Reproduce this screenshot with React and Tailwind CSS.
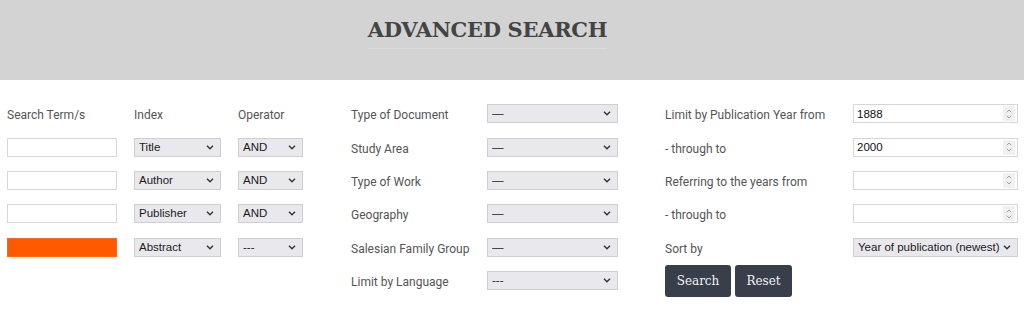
import React from "react";

const Chevron = () => (
  <svg width="8" height="5" viewBox="0 0 8 5" className="pointer-events-none absolute right-[7px] top-[7px]">
    <path d="M1 0.8 L4 3.8 L7 0.8" fill="none" stroke="#333" strokeWidth="1.4" />
  </svg>
);

function Select({ value, w }) {
  return (
    <div className={`relative h-[19px] ${w}`}>
      <select
        defaultValue={value}
        className="block h-[19px] w-full appearance-none rounded-none border border-[#cfcfd3] bg-[#e9e9ed] py-0 pl-[4px] pr-[14px] text-[11.5px] leading-[17px] text-[#1a1a1a] outline-none [font-family:'Liberation_Sans',Arial,sans-serif]"
      >
        <option>{value}</option>
      </select>
      <Chevron />
    </div>
  );
}

function NumInput({ value }) {
  return (
    <div className="relative h-[19px] w-[165px]">
      <input
        type="text"
        defaultValue={value}
        className="block h-[19px] w-full border border-[#d6d6d6] bg-white py-0 pl-[3px] text-[11.5px] text-[#111] outline-none [font-family:'Liberation_Sans',Arial,sans-serif]"
      />
      <div className="pointer-events-none absolute right-[3px] top-[2px] flex h-[15px] w-[12px] flex-col items-center justify-center gap-[2px] bg-[#f0f0f0]">
        <svg width="6" height="4" viewBox="0 0 6 4"><path d="M0.8 3.3 L3 1 L5.2 3.3" fill="none" stroke="#a0a0a0" strokeWidth="1" /></svg>
        <svg width="6" height="4" viewBox="0 0 6 4"><path d="M0.8 0.7 L3 3 L5.2 0.7" fill="none" stroke="#a0a0a0" strokeWidth="1" /></svg>
      </div>
    </div>
  );
}

const Label = ({ children, className = "" }) => (
  <div className={`flex items-center pt-[3px] text-[12px] text-[#555] ${className}`}>{children}</div>
);

export default function App() {
  const rows = [
    ["Title", "AND"],
    ["Author", "AND"],
    ["Publisher", "AND"],
    ["Abstract", "---"],
  ];
  const mid = [
    ["Type of Document", "—"],
    ["Study Area", "—"],
    ["Type of Work", "—"],
    ["Geography", "—"],
    ["Salesian Family Group", "—"],
    ["Limit by Language", "---"],
  ];
  const right = [
    ["Limit by Publication Year from", "1888"],
    ["- through to", "2000"],
    ["Referring to the years from", ""],
    ["- through to", ""],
  ];
  return (
    <div className="min-h-[315px] w-[1024px] bg-white [font-family:Roboto,'Noto_Sans',sans-serif]">
      <div className="flex h-[80px] justify-center bg-[#d3d3d3] pr-[49px] pt-[14px]">
        <div className="h-[35px] border-b border-[#dddddd]">
          <h1 className="text-[21px] font-bold leading-[32px] tracking-[-0.3px] text-[#444] [font-family:'DejaVu_Serif',serif]">
            ADVANCED SEARCH
          </h1>
        </div>
      </div>

      <div className="flex pt-[17px]">
        {/* Left group */}
        <div className="ml-[7px] grid w-[297px] grid-cols-[110px_87px_65px] auto-rows-[33.4px] gap-x-[17px]">
          <Label>Search Term/s</Label>
          <Label>Index</Label>
          <Label>Operator</Label>
          {rows.map(([idx, op], i) => (
            <React.Fragment key={i}>
              <div className="flex items-center">
                <input
                  type="text"
                  className={`block h-[19px] w-[110px] border outline-none ${i === 3 ? "border-[#f46a1e] bg-[#ff5a00]" : "border-[#d6d6d6] bg-white"}`}
                />
              </div>
              <div className="flex items-center">
                <Select value={idx} w="w-[87px]" />
              </div>
              <div className="flex items-center">
                <Select value={op} w="w-[65px]" />
              </div>
            </React.Fragment>
          ))}
        </div>

        {/* Middle group */}
        <div className="ml-[47px] grid grid-cols-[136px_131px] auto-rows-[33.4px]">
          {mid.map(([l, v], i) => (
            <React.Fragment key={i}>
              <Label>{l}</Label>
              <div className="flex items-center">
                <Select value={v} w="w-[131px]" />
              </div>
            </React.Fragment>
          ))}
        </div>

        {/* Right group */}
        <div className="ml-[47px] grid grid-cols-[188px_165px] auto-rows-[33.4px]">
          {right.map(([l, v], i) => (
            <React.Fragment key={i}>
              <Label>{l}</Label>
              <div className="flex items-center">
                <NumInput value={v} />
              </div>
            </React.Fragment>
          ))}
          <Label>Sort by</Label>
          <div className="flex items-center">
            <Select value="Year of publication (newest)" w="w-[165px]" />
          </div>
          <div className="col-span-2 flex items-center gap-[4px]">
            <button className="h-[32px] w-[66px] rounded-[3px] bg-[#383f4a] text-[12px] text-[#f2f2f2] [font-family:'DejaVu_Serif',serif]">
              Search
            </button>
            <button className="h-[32px] w-[57px] rounded-[3px] bg-[#383f4a] text-[12px] text-[#f2f2f2] [font-family:'DejaVu_Serif',serif]">
              Reset
            </button>
          </div>
        </div>
      </div>
    </div>
  );
}
